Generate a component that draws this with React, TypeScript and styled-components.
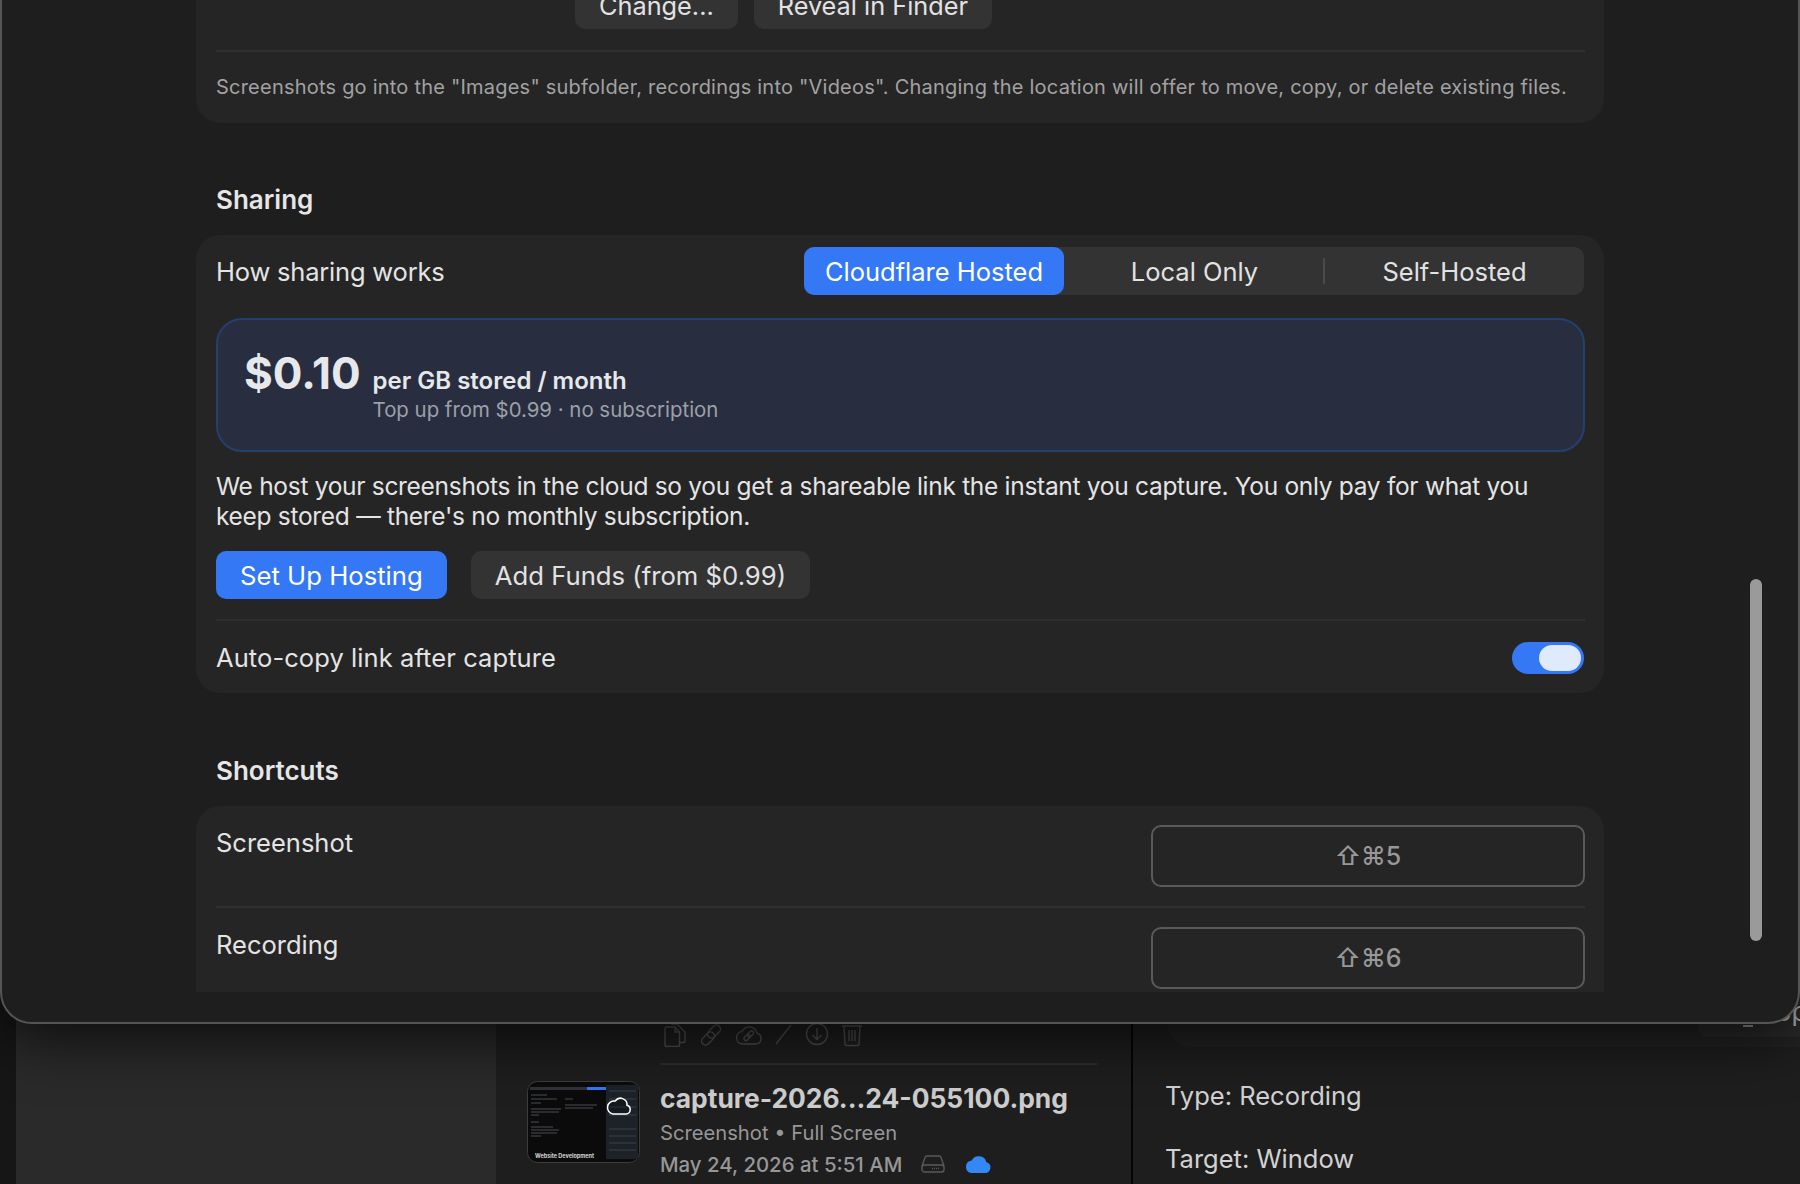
import React from "react";
import styled, { createGlobalStyle } from "styled-components";

const GlobalStyle = createGlobalStyle`
  html, body {
    margin: 0;
    padding: 0;
    background: #1c1c1c;
    font-family: Inter, "DejaVu Sans", sans-serif;
    -webkit-font-smoothing: antialiased;
  }
  * {
    box-sizing: border-box;
  }
`;

const Page = styled.div`
  position: relative;
  width: 1800px;
  height: 1184px;
  overflow: hidden;
`;

/* window behind the settings sheet */
const Backdrop = styled.div`
  display: grid;
  grid-template-columns: 16px 480px 637px 1fr;
  height: 100%;
  background: #1e1e1e;
`;

const Rail = styled.div`
  background: #161616;
`;

const Sidebar = styled.div`
  background: #2a2a2a;
`;

const ListColumn = styled.div`
  display: flex;
  flex-direction: column;
  justify-content: flex-end;
  padding: 0 34px 4px 31px;
  background: #1e1e1e;
  border-right: 2px solid #050505;
`;

const ActionIcons = styled.div`
  display: flex;
  align-items: flex-start;
  gap: 12px;
  height: 40px;
  margin-left: 133px;
  padding-left: 3px;
  color: #505050;
`;

const ListRule = styled.div`
  height: 2px;
  margin-left: 133px;
  background: #2c2c2c;
`;

const ListEntry = styled.div`
  display: grid;
  grid-template-columns: 113px 1fr;
  column-gap: 20px;
  padding-top: 15px;
`;

const Thumb = styled.svg`
  display: block;
  margin-top: 1px;
`;

const EntryBody = styled.div`
  display: flex;
  flex-direction: column;
`;

const FileName = styled.div`
  font-size: 26.4px;
  line-height: 36px;
  font-weight: 700;
  color: #cdcdcd;
  white-space: nowrap;
`;

const EntryMeta = styled.div<{ $strong?: boolean }>`
  display: flex;
  align-items: center;
  height: 32px;
  font-size: ${(p) => (p.$strong ? 20.4 : 20.2)}px;
  font-weight: ${(p) => (p.$strong ? 500 : 400)};
  color: #979797;
  white-space: nowrap;
`;

const DriveSlot = styled.svg`
  margin-left: 19px;
`;

const CloudSlot = styled.svg`
  margin-left: 20px;
`;

const DetailColumn = styled.div`
  display: flex;
  flex-direction: column;
  padding-left: 32px;
`;

const PreviewPanel = styled.div`
  display: flex;
  justify-content: flex-end;
  align-items: flex-end;
  flex: none;
  height: 1047px;
  margin-left: 2px;
  padding-bottom: 10px;
  background: #232323;
  border-radius: 0 0 0 24px;
`;

const PreviewChip = styled.div`
  position: relative;
  flex: none;
  width: 102px;
  height: 40px;
  padding-left: 59px;
  font-size: 26px;
  line-height: 30px;
  color: #bdbdbd;
  white-space: nowrap;
  background: #2b2b2b;
  border-radius: 10px 0 0 10px;
  overflow: hidden;

  &::before {
    content: "";
    position: absolute;
    top: 28px;
    left: 45px;
    width: 10px;
    height: 2px;
    background: #9a9a9a;
  }
`;

const DetailLine = styled.div`
  height: 32px;
  font-size: 25.5px;
  line-height: 32px;
  color: #d2d2d2;
`;

const DetailLines = styled.div`
  display: flex;
  flex-direction: column;
  gap: 31px;
  margin-top: 33px;
`;

/* settings sheet */
const Sheet = styled.div`
  position: absolute;
  top: -30px;
  left: 0;
  width: 1800px;
  height: 1054px;
  background: #1e1e1e;
  border: 2px solid #555555;
  border-radius: 32px;
  box-shadow: 0 12px 60px rgba(0, 0, 0, 0.75);
`;

const ScrollArea = styled.div`
  height: 1020px;
  padding: 0 194px;
  overflow: hidden;
`;

const ScrollContent = styled.div`
  margin-top: -12px;
`;

const ScrollThumb = styled.div`
  position: absolute;
  top: 607px;
  left: 1748px;
  width: 12px;
  height: 362px;
  background: #9a9a9a;
  border-radius: 6px;
`;

const Card = styled.section`
  background: #252525;
  border-radius: 24px;
  padding: 0 19px 0 20px;
`;

const ClippedCard = styled(Card)`
  border-radius: 24px 24px 0 0;
`;

const ButtonRow = styled.div<{ $gap: number }>`
  display: flex;
  gap: ${(p) => p.$gap}px;
`;

const LocationRow = styled(ButtonRow)`
  padding: 21px 0 21px 359px;
`;

const Button = styled.button<{ $primary?: boolean }>`
  height: 48px;
  padding: 0 24px;
  border: none;
  border-radius: 10px;
  font-family: inherit;
  font-size: 25.7px;
  color: ${(p) => (p.$primary ? "#ffffff" : "#e2e2e2")};
  background: ${(p) => (p.$primary ? "#3478f6" : "#333333")};
`;

const LocationButton = styled(Button)`
  font-size: 25.3px;
`;

const Rule = styled.div`
  height: 2px;
  background: #2f2f2f;
`;

const SpacedRule = styled(Rule)`
  margin-top: 20px;
`;

const Note = styled.p`
  margin: 0;
  padding: 21px 0 22px;
  font-size: 20px;
  letter-spacing: 0.22px;
  line-height: 28px;
  color: #a2a2a2;
  white-space: nowrap;
`;

const SectionTitle = styled.h2<{ $extra?: number }>`
  margin: 0;
  padding: ${(p) => 60 + (p.$extra ?? 0)}px 0 18px 20px;
  font-size: 26px;
  line-height: 34px;
  font-weight: 600;
  color: #e6e6e6;
`;

const SharingHeader = styled.div`
  display: flex;
  align-items: center;
  justify-content: space-between;
  padding: 12px 1px 0 0;
`;

const Label = styled.span<{ $track?: number }>`
  font-size: 25.5px;
  letter-spacing: ${(p) => p.$track ?? 0}px;
  color: #e4e4e4;
`;

const Segments = styled.div`
  display: grid;
  grid-template-columns: 260px 261px 1fr;
  width: 780px;
  height: 48px;
  background: #333333;
  border-radius: 10px;
`;

const Segment = styled.div<{ $active?: boolean; $split?: boolean }>`
  position: relative;
  display: flex;
  align-items: center;
  justify-content: center;
  font-size: 25.5px;
  color: ${(p) => (p.$active ? "#ffffff" : "#e2e2e2")};
  background: ${(p) => (p.$active ? "#3478f6" : "transparent")};
  border-radius: 10px;

  ${(p) =>
    p.$split &&
    `
    &::after {
      content: "";
      position: absolute;
      top: 11px;
      right: 0;
      width: 2px;
      height: 26px;
      background: #4a4a4a;
    }
  `}
`;

const PriceBox = styled.div`
  display: flex;
  align-items: flex-start;
  gap: 12px;
  height: 134px;
  margin-top: 23px;
  padding: 27px 26px 0;
  background: #282e3f;
  border: 2px solid #24406f;
  border-radius: 26px;
`;

const Price = styled.div`
  font-size: 44px;
  line-height: 52px;
  font-weight: 700;
  color: #e6e8ec;
`;

const PriceText = styled.div`
  display: flex;
  flex-direction: column;
  padding-top: 18px;
`;

const PriceUnit = styled.div`
  font-size: 24px;
  line-height: 31px;
  font-weight: 600;
  color: #e6e8ec;
`;

const PriceHint = styled.div`
  font-size: 20.4px;
  line-height: 28px;
  color: #9ca0a8;
`;

const Blurb = styled.p`
  margin: 19px 0 20px;
  font-size: 24.5px;
  letter-spacing: -0.3px;
  line-height: 30px;
  color: #e4e4e4;
`;

const ToggleRow = styled.div`
  display: flex;
  align-items: center;
  justify-content: space-between;
  height: 72px;
  padding: 1px 1px 0 0;
`;

const Toggle = styled.div`
  display: flex;
  justify-content: flex-end;
  align-items: center;
  width: 72px;
  height: 32px;
  padding-right: 3px;
  background: #3478f6;
  border-radius: 16px;
`;

const Knob = styled.div`
  width: 42px;
  height: 26px;
  background: #e0eafd;
  border-radius: 13px;
`;

const ShortcutRow = styled.div`
  display: flex;
  justify-content: space-between;
  align-items: flex-start;
  height: 100px;
  padding: 19px 0 0;
`;

const ShortcutLabel = styled(Label)`
  line-height: 36px;
`;

const ShortcutField = styled.div`
  display: flex;
  align-items: center;
  justify-content: center;
  width: 434px;
  height: 62px;
  border: 2px solid #5a5a5a;
  border-radius: 10px;
  font-size: 25px;
  font-weight: 500;
  color: #989898;
`;

const FilesIcon = () => (
  <svg width="24" height="24" viewBox="0 0 24 24" fill="none" stroke="currentColor" strokeWidth="1.4">
    <path d="M2 5.5 L2 22 a1.5 1.5 0 0 0 1.5 1.5 H15 a1.5 1.5 0 0 0 1.5 -1.5 V9 L12 4 H3.5 A1.5 1.5 0 0 0 2 5.5 Z" />
    <path d="M12 4 V9 H16.5" />
    <path d="M8 1 H14 L22 9 V18 a1.5 1.5 0 0 1 -1.5 1.5 H17" />
  </svg>
);

const LinkIcon = () => (
  <svg width="24" height="24" viewBox="0 0 24 24" fill="none" stroke="currentColor" strokeWidth="1.4">
    <rect x="11" y="1" width="8" height="15" rx="4" transform="rotate(45 15 8.5)" />
    <rect x="5" y="8" width="8" height="15" rx="4" transform="rotate(45 9 15.5)" />
  </svg>
);

const CloudLinkIcon = () => (
  <svg width="28" height="24" viewBox="0 0 28 24" fill="none" stroke="currentColor" strokeWidth="1.4">
    <path d="M7 21 H21 a5.5 5.5 0 0 0 1 -10.8 A8 8 0 0 0 7 8.5 a6.3 6.3 0 0 0 0 12.5 Z" />
    <rect x="13.5" y="7.5" width="4" height="7" rx="2" transform="rotate(45 15.5 11)" />
    <rect x="10" y="11" width="4" height="7" rx="2" transform="rotate(45 12 14.5)" />
  </svg>
);

const PencilIcon = () => (
  <svg width="18" height="22" viewBox="0 0 18 22" fill="none" stroke="currentColor" strokeWidth="1.4">
    <path d="M1 21 L16 2" />
  </svg>
);

const DownloadIcon = () => (
  <svg width="24" height="24" viewBox="0 0 24 24" fill="none" stroke="currentColor" strokeWidth="1.4">
    <circle cx="12" cy="11" r="10.5" />
    <path d="M12 5 V16 M7.5 12 L12 16.5 L16.5 12" />
  </svg>
);

const TrashIcon = () => (
  <svg width="22" height="24" viewBox="0 0 22 24" fill="none" stroke="currentColor" strokeWidth="1.4">
    <path d="M1 3 H21 M3 3 L4 21 a1.5 1.5 0 0 0 1.5 1.5 H16.5 a1.5 1.5 0 0 0 1.5 -1.5 L19 3" />
    <path d="M8 7 V18 M11 7 V18 M14 7 V18" />
  </svg>
);

const DriveIcon = () => (
  <DriveSlot width="24" height="18" viewBox="0 0 24 18" fill="none" stroke="#595959" strokeWidth="1.4">
    <path d="M1 11 L4 2.5 A2 2 0 0 1 6 1 H18 a2 2 0 0 1 2 1.5 L23 11" />
    <rect x="1" y="10" width="22" height="7" rx="2.5" />
    <path d="M11 13.5 H19" strokeDasharray="1 1" />
  </DriveSlot>
);

const CloudIcon = () => (
  <CloudSlot width="26" height="18" viewBox="0 0 26 18" fill="#3587f5">
    <path d="M6 18 H20 a5.5 5.5 0 0 0 1.4 -10.8 A8 8 0 0 0 6.6 5.4 A6.4 6.4 0 0 0 6 18 Z" />
  </CloudSlot>
);

const CaptureThumb = () => (
  <Thumb width="113" height="82" viewBox="0 0 113 82">
    <rect x="0.5" y="0.5" width="112" height="81" rx="10" fill="#0b0b0b" stroke="#3d3d3d" />
    <rect x="3" y="6" width="76" height="3" fill="#30343a" />
    <rect x="60" y="6" width="19" height="3" fill="#3478f6" />
    <rect x="79" y="4" width="32" height="74" fill="#1d2229" />
    <path d="M82 10 H109 M82 18 H109 M82 26 H109 M82 34 H109 M82 48 H109 M82 55 H109 M82 62 H109 M82 69 H109" stroke="#39404a" strokeWidth="1" />
    <path d="M4 14 H20 M4 18 H30 M4 22 H14 M4 28 H34 M4 31 H32 M4 34 H12 M4 41 H12 M4 46 H26 M4 49 H32 M4 52 H30 M4 55 H14 M38 18 H46 M38 24 H70 M38 27 H66" stroke="#4a4f55" strokeWidth="1" />
    <text x="8" y="77" fontSize="5.5" fontWeight="700" fontFamily="Inter, sans-serif" fill="#d8d8d8">Website Development</text>
    <path d="M86 33 H99 a4.5 4.5 0 0 0 1 -8.8 A6.5 6.5 0 0 0 88.2 20 A5.6 5.6 0 0 0 86 33 Z" fill="rgba(0,0,0,0.25)" stroke="#ffffff" strokeWidth="1.5" />
  </Thumb>
);

export default function App() {
  return (
    <Page>
      <GlobalStyle />
      <Backdrop>
        <Rail />
        <Sidebar />
        <ListColumn>
          <ActionIcons>
            <FilesIcon />
            <LinkIcon />
            <CloudLinkIcon />
            <PencilIcon />
            <DownloadIcon />
            <TrashIcon />
          </ActionIcons>
          <ListRule />
          <ListEntry>
            <CaptureThumb />
            <EntryBody>
              <FileName>capture-2026...24-055100.png</FileName>
              <EntryMeta>Screenshot • Full Screen</EntryMeta>
              <EntryMeta $strong>
                May 24, 2026 at 5:51 AM
                <DriveIcon />
                <CloudIcon />
              </EntryMeta>
            </EntryBody>
          </ListEntry>
        </ListColumn>
        <DetailColumn>
          <PreviewPanel>
            <PreviewChip>Copy</PreviewChip>
          </PreviewPanel>
          <DetailLines>
            <DetailLine>Type: Recording</DetailLine>
            <DetailLine>Target: Window</DetailLine>
          </DetailLines>
        </DetailColumn>
      </Backdrop>

      <Sheet>
        <ScrollArea>
          <ScrollContent>
            <Card>
              <LocationRow $gap={16}>
                <LocationButton>Change...</LocationButton>
                <LocationButton>Reveal in Finder</LocationButton>
              </LocationRow>
              <Rule />
              <Note>
                Screenshots go into the "Images" subfolder, recordings into "Videos". Changing the location will offer to move, copy, or delete existing files.
              </Note>
            </Card>

            <SectionTitle>Sharing</SectionTitle>
            <Card>
              <SharingHeader>
                <Label $track={-0.2}>How sharing works</Label>
                <Segments>
                  <Segment $active>Cloudflare Hosted</Segment>
                  <Segment $split>Local Only</Segment>
                  <Segment>Self-Hosted</Segment>
                </Segments>
              </SharingHeader>
              <PriceBox>
                <Price>$0.10</Price>
                <PriceText>
                  <PriceUnit>per GB stored / month</PriceUnit>
                  <PriceHint>Top up from $0.99 · no subscription</PriceHint>
                </PriceText>
              </PriceBox>
              <Blurb>
                We host your screenshots in the cloud so you get a shareable link the instant you capture. You only pay for what you
                <br />
                keep stored — there's no monthly subscription.
              </Blurb>
              <ButtonRow $gap={24}>
                <Button $primary>Set Up Hosting</Button>
                <Button>Add Funds (from $0.99)</Button>
              </ButtonRow>
              <SpacedRule />
              <ToggleRow>
                <Label $track={0.08}>Auto-copy link after capture</Label>
                <Toggle>
                  <Knob />
                </Toggle>
              </ToggleRow>
            </Card>

            <SectionTitle $extra={1}>Shortcuts</SectionTitle>
            <ClippedCard>
              <ShortcutRow>
                <ShortcutLabel>Screenshot</ShortcutLabel>
                <ShortcutField>⇧⌘5</ShortcutField>
              </ShortcutRow>
              <Rule />
              <ShortcutRow>
                <ShortcutLabel>Recording</ShortcutLabel>
                <ShortcutField>⇧⌘6</ShortcutField>
              </ShortcutRow>
            </ClippedCard>
          </ScrollContent>
        </ScrollArea>
        <ScrollThumb />
      </Sheet>
    </Page>
  );
}
